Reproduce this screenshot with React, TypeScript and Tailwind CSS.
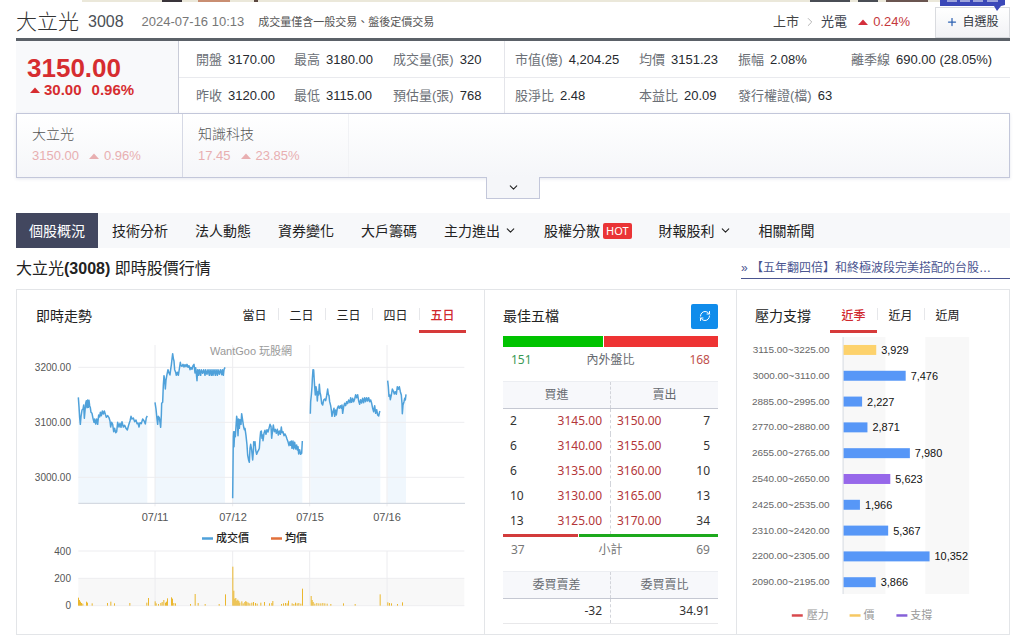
import { ChevronDown, ChevronRight, Plus, RefreshCw } from "lucide-react";
import clsx from "clsx";

const leftStats = [
  ["開盤", "3170.00"],
  ["最高", "3180.00"],
  ["成交量(張)", "320"],
  ["昨收", "3120.00"],
  ["最低", "3115.00"],
  ["預估量(張)", "768"],
];

const rightStats = [
  ["市值(億)", "4,204.25"],
  ["均價", "3151.23"],
  ["振幅", "2.08%"],
  ["離季線", "690.00 (28.05%)"],
  ["股淨比", "2.48"],
  ["本益比", "20.09"],
  ["發行權證(檔)", "63"],
];

const navItems = [
  { label: "個股概況", active: true },
  { label: "技術分析" },
  { label: "法人動態" },
  { label: "資券變化" },
  { label: "大戶籌碼" },
  { label: "主力進出", more: true },
  { label: "股權分散", hot: true },
  { label: "財報股利", more: true },
  { label: "相關新聞" },
];

const orders = [
  ["2", "3145.00", "3150.00", "7"],
  ["6", "3140.00", "3155.00", "5"],
  ["6", "3135.00", "3160.00", "10"],
  ["10", "3130.00", "3165.00", "13"],
  ["13", "3125.00", "3170.00", "34"],
];

const levels = [
  { range: "3115.00~3225.00", value: 3929, color: "#fdd26c" },
  { range: "3000.00~3110.00", value: 7476, color: "#5797f7" },
  { range: "2885.00~2995.00", value: 2227, color: "#5797f7" },
  { range: "2770.00~2880.00", value: 2871, color: "#5797f7" },
  { range: "2655.00~2765.00", value: 7980, color: "#5797f7" },
  { range: "2540.00~2650.00", value: 5623, color: "#9768ea" },
  { range: "2425.00~2535.00", value: 1966, color: "#5797f7" },
  { range: "2310.00~2420.00", value: 5367, color: "#5797f7" },
  { range: "2200.00~2305.00", value: 10352, color: "#5797f7" },
  { range: "2090.00~2195.00", value: 3866, color: "#5797f7" },
];

// one line per trading day, three units per pixel
const days = [
  "205,187 207,215 209,248 211,268 213,245 216,225 219,222 221,210 223,250 225,228 227,205 229,197 231,218 233,195 235,217 237,196 239,212 241,218 243,232 246,235 249,250 252,262 254,252 257,267 260,252 263,268 266,240 269,246 271,232 274,242 277,228 280,237 283,228 286,238 289,247 293,242 297,248 300,258 302,276 305,262 308,268 311,290 314,280 317,293 320,290 323,262 327,276 330,265 333,277 336,260 340,276 344,271 348,280 352,285 356,270 360,258 363,244 366,252 370,249 374,260 378,255 381,266 384,264 387,276 390,263 394,266 398,252 402,257 406,267 409,248 412,243",
  "435,202 438,222 441,252 443,268 445,244 448,248 450,262 452,277 454,240 455,205 458,202 460,150 462,122 464,135 466,162 468,135 471,118 474,104 477,114 480,120 482,103 484,90 486,72 488,56 490,70 492,78 494,104 497,112 499,121 502,112 505,121 508,102 511,82 513,92 516,94 519,88 522,96 525,89 528,95 531,88 534,97 537,92 540,104 543,97 546,103 549,92 552,88 555,114 557,98 559,116 561,137 563,104 566,121 568,104 572,121 574,104 578,115 581,104 585,121 587,104 591,118 594,104 598,121 600,104 604,121 606,104 609,121 612,104 616,121 618,104 622,121 624,104 628,118 631,104 635,119 637,104 640,121 642,104 645,97",
  "668,490 669,400 670,305 671,290 672,335 674,290 676,305 678,275 680,244 682,256 684,302 686,252 688,280 690,254 693,268 695,236 698,256 701,276 703,284 705,280 708,302 711,330 713,360 716,376 718,382 720,340 722,328 725,345 728,375 730,350 731,320 733,330 735,320 737,345 740,358 743,350 746,345 748,340 750,310 752,290 754,288 756,310 758,300 759,317 762,295 765,286 768,298 771,284 774,291 777,280 780,268 783,274 785,310 788,284 790,270 793,290 796,283 799,295 802,283 805,300 808,288 811,298 814,276 816,293 819,290 822,302 825,297 828,303 831,312 834,320 837,332 840,320 842,331 844,318 846,340 849,318 851,342 854,322 857,342 860,330 862,345 864,335 866,357 869,344 872,358 875,355 877,318",
  "901,236 902,200 904,180 906,155 907,132 909,104 911,105 913,140 914,155 916,180 918,155 920,166 922,198 924,170 926,180 928,148 930,172 932,180 935,205 938,210 941,195 944,192 947,197 950,182 953,162 955,178 957,182 959,200 962,212 964,225 966,244 969,230 972,220 974,244 977,225 979,240 982,220 985,213 988,220 991,212 994,220 996,210 998,235 1001,215 1004,205 1007,212 1010,200 1013,206 1016,195 1020,203 1022,188 1025,202 1028,190 1031,200 1034,192 1037,179 1040,188 1043,179 1046,198 1049,208 1052,194 1055,204 1058,190 1061,203 1064,188 1067,200 1070,188 1073,198 1076,188 1079,200 1082,195 1085,205 1088,220 1091,230 1094,212 1097,235 1100,224 1103,240 1106,243 1109,230 1111,229",
  "1133,137 1135,155 1137,184 1139,180 1141,194 1144,180 1147,162 1150,168 1153,177 1156,170 1159,178 1162,155 1165,163 1168,155 1171,170 1174,180 1176,205 1177,236 1179,210 1182,200 1184,190 1186,195 1188,178",
];

const volumes = [
  [205, 233], [208, 240], [211, 245], [214, 249], [218, 251], [229, 245], [232, 248], [246, 250],
  [292, 249], [302, 245], [313, 250], [359, 249], [410, 248], [415, 234], [435, 244], [438, 250],
  [445, 252], [452, 249], [456, 246], [461, 240], [466, 248], [469, 245], [472, 235], [484, 232],
  [487, 236], [491, 249], [496, 250], [541, 252], [555, 222], [564, 249], [585, 252], [627, 252],
  [646, 223], [668, 140], [671, 212], [674, 236], [677, 234], [680, 242], [683, 239], [686, 243],
  [689, 248], [695, 244], [699, 250], [704, 246], [707, 243], [710, 246], [714, 248], [719, 250],
  [725, 248], [730, 246], [736, 249], [741, 251], [752, 248], [763, 246], [778, 250], [785, 249],
  [788, 243], [814, 252], [820, 250], [826, 249], [831, 250], [835, 242], [846, 250], [851, 252],
  [856, 248], [861, 250], [866, 249], [872, 251], [877, 206], [903, 228], [906, 240], [909, 246],
  [914, 251], [920, 249], [926, 250], [932, 250], [938, 249], [944, 250], [951, 251], [962, 252],
  [1000, 250], [1035, 252], [1110, 223], [1133, 247], [1138, 249], [1144, 250], [1162, 252], [1177, 247],
];

const Triangle = ({ className }: { className: string }) => (
  <svg viewBox="0 0 10 6" className={className} aria-hidden="true">
    <path d="M5 0.5 L10 6 H0 Z" fill="currentColor" />
  </svg>
);

const Stat = ({ item }: { item: string[] }) => (
  <div className="flex items-center gap-[6px] pt-[2px] whitespace-nowrap">
    <dt className="text-[#6b6f76]">{item[0]}</dt>
    <dd className="text-[#26292e]">{item[1]}</dd>
  </div>
);

const Tabs = ({ items, active }: { items: string[]; active: string }) => (
  <div className="flex">
    {items.map((t, i) => (
      <button
        key={t}
        className={clsx(
          "h-[35px] w-[47px] border-b-[3px] pt-[3px] text-[12px]",
          t === active ? "border-b-[#d63a3a] font-medium text-[#d0282d]" : "border-b-transparent text-[#222]",
          i > 0 && "bg-[linear-gradient(#e6e7ea,#e6e7ea)] bg-[length:1px_12px] bg-left bg-no-repeat"
        )}
      >
        {t}
      </button>
    ))}
  </div>
);

const TrendChart = () => (
  <svg viewBox="0 0 467 280" className="block w-full" role="img" aria-label="即時走勢">
    <g transform="translate(-7 -2) scale(0.33333)">
      {days.map((d) => {
        const first = d.split(",")[0];
        const last = d.split(" ").pop()?.split(",")[0];
        return <polygon key={d} points={`${first},505 ${d} ${last},505`} fill="#f0f7fd" />;
      })}
      <path d="M205 97H1363M205 262H1363M205 427H1363" stroke="#ededf0" strokeWidth="3" />
      <path d="M435 30V514M668 30V514M899 30V514M1131 30V514" stroke="#ececef" strokeWidth="3" />
      <path d="M205 505H1365" stroke="#cdd3dc" strokeWidth="3" />
      {days.map((d) => (
        <polyline key={d} points={d} fill="none" stroke="#4fa1da" strokeWidth="4.5" strokeLinejoin="round" />
      ))}
    </g>
    <g fontSize="10" fill="#555" textAnchor="end">
      <text x="54" y="34">3200.00</text>
      <text x="54" y="89">3100.00</text>
      <text x="54" y="144">3000.00</text>
      <text x="54" y="218">400</text>
      <text x="54" y="245">200</text>
      <text x="54" y="272">0</text>
    </g>
    <g fontSize="11" fill="#555" textAnchor="middle">
      <text x="138" y="184">07/11</text>
      <text x="216" y="184">07/12</text>
      <text x="293" y="184">07/15</text>
      <text x="370" y="184">07/16</text>
      <text x="234" y="18" fill="#999">WantGoo 玩股網</text>
    </g>
    <path d="M185 201.5H196" stroke="#4fa1da" strokeWidth="2.5" />
    <path d="M254 201.5H265" stroke="#e2703a" strokeWidth="2.5" />
    <g fontSize="11" fill="#222" fontWeight="500">
      <text x="199" y="205">成交價</text>
      <text x="268" y="205">均價</text>
    </g>
    <g transform="translate(-7 183) scale(0.33333)">
      <rect x="205" y="175" width="1158" height="82" fill="#f8f8f8" />
      <path d="M205 93H1363M205 175H1363M205 257H1363" stroke="#ededf0" strokeWidth="3" />
      <path d="M435 93V257M668 93V257M899 93V257M1131 93V257" stroke="#ececef" strokeWidth="3" />
      {volumes.map(([x, top]) => (
        <rect key={x} x={x - 1} y={top} width="3" height={257 - top} fill="#ebb72e" />
      ))}
    </g>
  </svg>
);

const LevelChart = () => (
  <svg viewBox="0 0 273 290" className="block w-full" role="img" aria-label="壓力支撐">
    <rect x="106" y="0" width="43" height="258" fill="#f8f8f8" />
    <rect x="189" y="0" width="44" height="258" fill="#f8f8f8" />
    <path d="M106.5 0V258" stroke="#d8dce3" />
    {levels.map((l, i) => {
      const y = 13 + i * 25.9;
      const width = l.value / 120;
      return (
        <g key={l.range}>
          <text x="93" y={y + 3} fontSize="10" fill="#666" textAnchor="end">{l.range}</text>
          <rect x="107" y={y - 5} width={width} height="10" fill={l.color} />
          <text x={112 + width} y={y + 4} fontSize="11" fill="#111">{l.value.toLocaleString("en-US")}</text>
        </g>
      );
    })}
    <g strokeWidth="2.5">
      <path d="M55 279.5H66" stroke="#d8494d" />
      <path d="M113 279.5H124" stroke="#f6c862" />
      <path d="M160 279.5H171" stroke="#8560d8" />
    </g>
    <g fontSize="11" fill="#999">
      <text x="70" y="283">壓力</text>
      <text x="127" y="283">價</text>
      <text x="174" y="283">支撐</text>
    </g>
  </svg>
);

const OrderBook = () => (
  <div className="px-[18px] text-[12px]">
    <div className="flex h-[46px] items-center justify-between pt-[6px]">
      <h3 className="text-[14px] text-[#222]">最佳五檔</h3>
      <button aria-label="更新" className="flex h-[25px] w-[27px] items-center justify-center rounded-[2px] bg-[#108ceb] text-white">
        <RefreshCw size={12} strokeWidth={2} />
      </button>
    </div>
    <div className="flex h-[11px] gap-px">
      <div className="bg-[#00c300]" style={{ flex: 100 }} />
      <div className="bg-[#ee3333]" style={{ flex: 114 }} />
    </div>
    <div className="flex h-[34px] justify-between px-2 pt-1 leading-[18px]">
      <span className="font-['Noto_Sans'] text-[#3a9a55]">151</span>
      <span className="text-[#666a70]">內外盤比</span>
      <span className="font-['Noto_Sans'] text-[#c0504d]">168</span>
    </div>
    <table className="w-full table-fixed border-collapse">
      <thead>
        <tr className="h-[27px] border-t border-b border-t-[#eceef2] border-b-[#c5c8d2] bg-[#f7f8fb] text-[#666a70]">
          <th colSpan={2} className="border-r border-dashed border-r-[#d2d4da] p-0 font-normal">買進</th>
          <th colSpan={2} className="p-0 font-normal">賣出</th>
        </tr>
      </thead>
      <tbody className="font-['Noto_Sans']">
        {orders.map(([bidQty, bid, ask, askQty]) => (
          <tr key={bid} className="h-[25px] leading-[18px] text-[#333]">
            <td className="p-0 pl-[7px]">{bidQty}</td>
            <td className="border-r border-dashed border-r-[#d2d4da] p-0 pr-2 text-right text-[#b33639]">{bid}</td>
            <td className="p-0 pl-[6px] text-[#b33639]">{ask}</td>
            <td className="p-0 pr-2 text-right">{askQty}</td>
          </tr>
        ))}
      </tbody>
    </table>
    <div className="flex h-[3px] gap-px">
      <div className="bg-[#d23b3b]" style={{ flex: 37 }} />
      <div className="bg-[#1da91d]" style={{ flex: 69 }} />
    </div>
    <div className="flex h-[34px] justify-between px-2 pt-1 leading-[18px] text-[#777]">
      <span className="font-['Noto_Sans']">37</span>
      <span>小計</span>
      <span className="font-['Noto_Sans']">69</span>
    </div>
    <table className="w-full table-fixed border-collapse">
      <thead>
        <tr className="h-[27px] border-t border-b border-t-[#eceef2] border-b-[#c5c8d2] bg-[#f7f8fb] text-[#666a70]">
          <th className="border-r border-dashed border-r-[#d2d4da] p-0 font-normal">委買賣差</th>
          <th className="p-0 font-normal">委買賣比</th>
        </tr>
      </thead>
      <tbody>
        <tr className="h-[25px] border-b border-[#e8e8ea] font-['Noto_Sans'] leading-[18px] text-[#333]">
          <td className="border-r border-dashed border-r-[#d2d4da] p-0 pr-2 text-right">-32</td>
          <td className="p-0 pr-2 text-right">34.91</td>
        </tr>
      </tbody>
    </table>
  </div>
);

export default function App() {
  return (
    <div className="min-h-screen bg-white pr-[14px] pl-4 font-['Liberation_Sans','Noto_Sans_CJK_TC',sans-serif] text-[13px] leading-[20px] text-[#222]">
      {/* bottom edge of the banner */}
      <div className="relative mr-[70px] ml-[66px] flex h-[2px] bg-[#ebe8da]">
        <div className="ml-[80px] w-5 bg-[#39343a]" />
        <div className="ml-4 w-8 bg-[#c98e72]" />
        <div className="ml-[24px] w-1 bg-[#5b4740]" />
        <div className="ml-auto w-10 bg-[#4a4d55]" />
        <div className="ml-2 w-5 bg-[#4a4d55]" />
        <div className="mr-3 ml-2 w-[42px] bg-[#6a5550]" />
        <svg width="66" height="11" viewBox="0 0 66 11" className="absolute top-0 left-full z-10" aria-hidden="true">
          <path d="M0 0H65V5L61 6L57 11L54 6H0Z" fill="#3b48b8" />
          <path d="M7 1H17M20 1H30M33 1H43M47 1H58" stroke="#fff" strokeWidth="1" />
        </svg>
      </div>

      <header className="flex h-[39px] items-center border-b-[3px] border-[#5b6168] pt-1">
        <h1 className="flex items-center gap-[9px] text-[#333]">
          <span className="text-[21px] font-light">大立光</span>
          <span className="text-[16px] font-normal text-[#4b4f55]">3008</span>
        </h1>
        <time className="ml-[18px] text-[#777]">2024-07-16 10:13</time>
        <span className="ml-[14px] text-[11px] text-[#555]">成交量僅含一般交易、盤後定價交易</span>
        <div className="ml-auto flex items-center">
          <a href="#" className="text-[#444]">上市</a>
          <ChevronRight size={14} strokeWidth={1.5} className="mx-1 text-[#aaa]" />
          <a href="#" className="text-[#3b414d]">光電</a>
          <Triangle className="mr-[5px] ml-[11px] h-[6px] w-[10px] text-[#d42f3c]" />
          <span className="text-[#c5383c]">0.24%</span>
        </div>
        <button className="ml-[25px] flex h-[31px] w-[75px] items-center justify-center gap-1 border border-[#d9dbdf] bg-gradient-to-b from-white to-[#f1f2f5] text-[12px] text-[#33373f]">
          <Plus size={12} strokeWidth={2.5} className="text-[#2d62b3]" />
          自選股
        </button>
      </header>

      <section className="flex h-[72px]">
        <div className="w-[163px] border-r border-[#c9ccd8] bg-[#f8f9fb] pt-[14px] pl-[11px] font-bold text-[#d62d30]">
          <div className="text-[26px] leading-[26px]">3150.00</div>
          <div className="flex items-center text-[15px] leading-[18px]">
            <Triangle className="mr-1 ml-[3px] h-[6px] w-[10px]" />
            <span>30.00</span>
            <span className="ml-[10px]">0.96%</span>
          </div>
        </div>
        <dl className="grid w-[326px] grid-cols-[98px_99px_1fr] grid-rows-2 border-r border-[#e4e5ea] bg-[linear-gradient(#e9eaee,#e9eaee)] bg-[length:100%_1px] bg-center bg-no-repeat pl-[17px]">
          {leftStats.map((s) => <Stat key={s[0]} item={s} />)}
        </dl>
        <dl className="grid flex-1 grid-cols-[124px_99px_113px_1fr] grid-rows-2 bg-[linear-gradient(#e9eaee,#e9eaee)] bg-[length:100%_1px] bg-center bg-no-repeat pl-[10px]">
          {rightStats.map((s) => <Stat key={s[0]} item={s} />)}
        </dl>
      </section>

      <section className="relative flex h-[65px] border border-[#c3c7da] bg-gradient-to-b from-white to-[#f5f6f9] shadow-[0_1px_3px_rgba(90,100,140,0.15)]">
        <a href="#" className="w-[166px] border-r border-[#d6d9e5] pt-[10px] pl-[15px] leading-[21px]">
          <div className="text-[14px] font-light text-[#555]">大立光</div>
          <div className="flex items-center text-[#e8afb1]">
            3150.00
            <Triangle className="mr-[5px] ml-[10px] h-[6px] w-[10px]" />
            0.96%
          </div>
        </a>
        <a href="#" className="w-[166px] border-r border-[#f1f2f5] pt-[10px] pl-[15px] leading-[21px]">
          <div className="text-[14px] font-light text-[#555]">知識科技</div>
          <div className="flex items-center text-[#e8afb1]">
            17.45
            <Triangle className="mr-[5px] ml-[10px] h-[6px] w-[10px]" />
            23.85%
          </div>
        </a>
        <button
          aria-label="展開"
          className="absolute top-[63px] left-1/2 flex h-[22px] w-[54px] -translate-x-1/2 items-center justify-center border border-t-0 border-[#c3c7da] bg-[#f5f6f9]"
        >
          <ChevronDown size={13} strokeWidth={2} />
        </button>
      </section>

      <nav className="mt-[35px] flex h-[35px] gap-px bg-[#f7f8fa] text-[14px]">
        {navItems.map((n) => (
          <a
            key={n.label}
            href="#"
            className={clsx(
              "flex items-center px-[13px] whitespace-nowrap",
              n.active ? "bg-[#42475f] text-white" : "text-[#222]"
            )}
          >
            {n.label}
            {n.more && <ChevronDown size={13} strokeWidth={2} className="ml-1" />}
            {n.hot && (
              <span className="ml-[3px] rounded-[2px] bg-[#ea3436] px-[3px] font-['Noto_Sans'] text-[11px] leading-[16px] text-white">
                HOT
              </span>
            )}
          </a>
        ))}
      </nav>

      <div className="flex h-[41px] items-center justify-between">
        <h2 className="text-[16px] text-[#222]">
          大立光<b>(3008)</b> 即時股價行情
        </h2>
        <a href="#" className="w-[269px] truncate border-b border-[#4a5590] text-[12px] text-[#4a5590]">
          » 【五年翻四倍】和終極波段完美搭配的台股…
        </a>
      </div>

      <main className="grid grid-cols-[468fr_252fr_272fr] divide-x divide-[#e3e5e8] border border-[#e3e5e8]">
        <section className="pb-2">
          <div className="mb-1 flex items-center justify-between pt-2 pr-[18px] pl-[19px]">
            <h3 className="text-[14px]">即時走勢</h3>
            <Tabs items={["當日", "二日", "三日", "四日", "五日"]} active="五日" />
          </div>
          <TrendChart />
        </section>
        <section className="pb-2">
          <OrderBook />
        </section>
        <section className="pb-2">
          <div className="mb-1 flex items-center gap-[19px] pt-2 pl-[18px]">
            <h3 className="text-[14px]">壓力支撐</h3>
            <Tabs items={["近季", "近月", "近周"]} active="近季" />
          </div>
          <LevelChart />
        </section>
      </main>
    </div>
  );
}
